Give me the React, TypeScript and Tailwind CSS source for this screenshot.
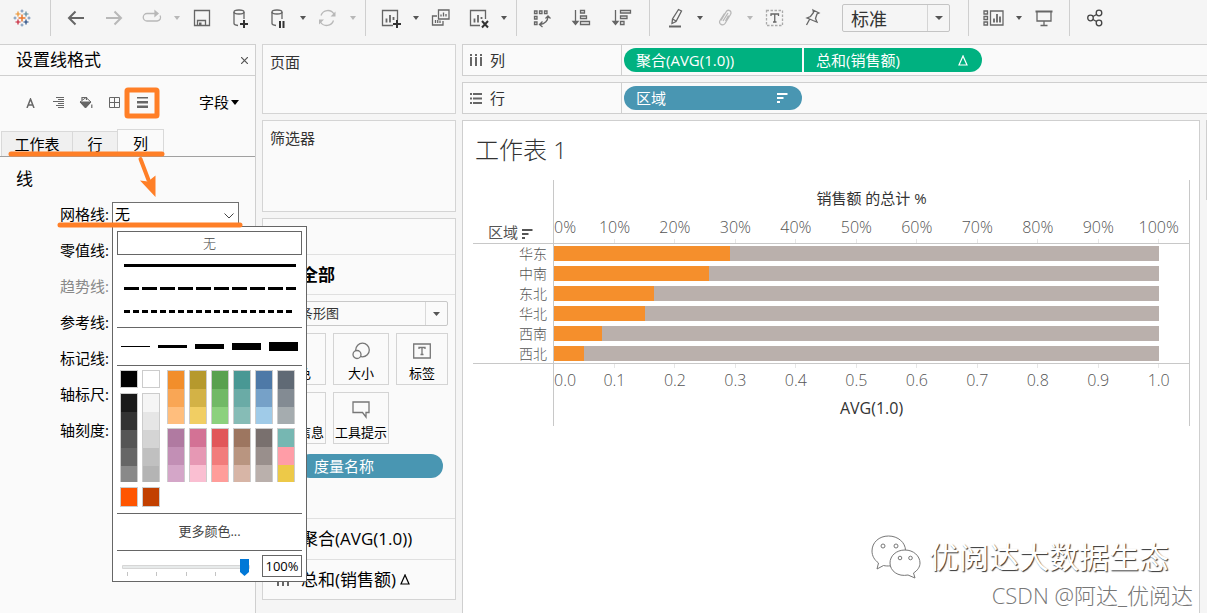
import type { ReactNode } from 'react';

const regions = [
  { name: '华东', share: 29.1 },
  { name: '中南', share: 25.7 },
  { name: '东北', share: 16.6 },
  { name: '华北', share: 15.1 },
  { name: '西南', share: 8 },
  { name: '西北', share: 5 },
];

const topTicks = ['0%', '10%', '20%', '30%', '40%', '50%', '60%', '70%', '80%', '90%', '100%'];
const bottomTicks = ['0.0', '0.1', '0.2', '0.3', '0.4', '0.5', '0.6', '0.7', '0.8', '0.9', '1.0'];

const greys = [
  ['#1a1a1a', '#f5f5f5'],
  ['#333333', '#e6e6e6'],
  ['#555555', '#d4d4d4'],
  ['#666666', '#c0c0c0'],
  ['#898989', '#b4b4b4'],
];

const palettes = [
  [
    ['#f28e2b', '#f9a655', '#ffbe7d'],
    ['#b6992d', '#d3b246', '#f1ce63'],
    ['#59a14f', '#71b966', '#8cd17d'],
    ['#499894', '#6aaba6', '#86bcb6'],
    ['#4e79a7', '#76a1c8', '#a0cbe8'],
    ['#606a75', '#838b93', '#a5acaf'],
  ],
  [
    ['#b07aa1', '#c28fb5', '#d4a6c8'],
    ['#d37295', '#e698b4', '#fabfd2'],
    ['#e15759', '#f17c7b', '#ff9d9a'],
    ['#9d7660', '#b99580', '#d7b5a6'],
    ['#79706e', '#998f8c', '#bab0ac'],
    ['#76b7b2', '#ff9da7', '#edc948'],
  ],
];

function Icon({ children, className = 'text-[#666]' }: { children: ReactNode; className?: string }) {
  return (
    <svg width="24" height="24" viewBox="0 0 24 24" fill="none" stroke="currentColor" strokeWidth="1.3" className={className}>
      {children}
    </svg>
  );
}

function Tool({ label, children }: { label: string; children: ReactNode }) {
  return (
    <button aria-label={label} className="flex h-8 w-[38px] items-center justify-center">
      {children}
    </button>
  );
}

function Caret({ faded = false }: { faded?: boolean }) {
  return (
    <button aria-label="展开" className="flex h-8 w-3 items-center justify-center">
      <svg width="6" height="4" viewBox="0 0 6 4" className={faded ? 'text-[#b8b8b8]' : 'text-[#555]'}>
        <path d="M0 0h6L3 4z" fill="currentColor" />
      </svg>
    </button>
  );
}

function Group({ children, className = 'px-1.5' }: { children: ReactNode; className?: string }) {
  return <div className={`flex h-9 items-center border-l border-[#cfcfcf] ${className}`}>{children}</div>;
}

function TableauLogo() {
  return (
    <svg width="24" height="24" viewBox="0 0 24 24" fill="none" strokeWidth="1.2">
      <path d="M12 8.500v7M8.500 12h7" stroke="#e8762c" strokeWidth="1.500" />
      <path d="M8 5.500v5M5.500 8h5" stroke="#eb912c" />
      <path d="M16 5.500v5M13.500 8h5" stroke="#59879b" />
      <path d="M8 13.500v5M5.500 16h5" stroke="#c72035" />
      <path d="M16 13.500v5M13.500 16h5" stroke="#1f457e" />
      <path d="M12 3.500v3M10.500 5h3M12 17.500v3M10.500 19h3M5 10.500v3M3.500 12h3M19 10.500v3M17.500 12h3" stroke="#6f8fb5" strokeWidth="1" />
    </svg>
  );
}

function Toolbar() {
  return (
    <header className="flex h-11 items-start">
      <div className="flex h-9 w-[50px] items-center pl-2.5">
        <button aria-label="起始页">
          <TableauLogo />
        </button>
      </div>
      <Group>
        <Tool label="撤消">
          <Icon><path d="M20 12H5M11.500 5.500L5 12l6.500 6.500" strokeWidth="2" /></Icon>
        </Tool>
        <Tool label="重做">
          <Icon className="text-[#b8b8b8]"><path d="M4 12h15M12.500 5.500L19 12l-6.500 6.500" strokeWidth="2" /></Icon>
        </Tool>
        <Tool label="重播">
          <Icon className="text-[#b8b8b8]">
            <path d="M17 7.500H7a3.500 3.500 0 0 0 0 7.500h10a3.500 3.500 0 0 0 3-5.500" />
            <path d="M15 5l3 2.500-3 2.500z" fill="currentColor" />
          </Icon>
        </Tool>
        <Caret faded />
        <Tool label="保存">
          <Icon>
            <path d="M4.500 4.500h15v15h-15zM7.500 19v-4.500h8V19" />
            <path d="M9 16.500h2.500V19H9z" fill="currentColor" stroke="none" />
          </Icon>
        </Tool>
        <Tool label="新建数据源">
          <Icon>
            <ellipse cx="11" cy="6" rx="5" ry="2" />
            <path d="M6 6v11.500c0 1 1.500 1.700 4 2M16 6v7" />
            <path d="M16 14v8M12 18h8" stroke="#333" strokeWidth="2" />
          </Icon>
        </Tool>
        <Tool label="暂停自动更新">
          <Icon>
            <ellipse cx="11" cy="6" rx="5" ry="2" />
            <path d="M6 6v11.500c0 1 1.500 1.700 4 2M16 6v7" />
            <path d="M14 15v7M17.500 15v7" stroke="#333" strokeWidth="2" />
          </Icon>
        </Tool>
        <Caret />
        <Tool label="刷新">
          <Icon className="text-[#b8b8b8]">
            <path d="M5 9.500a7.200 7.200 0 0 1 13-1.500M17.500 14.500a7.200 7.200 0 0 1-13 1.500" />
            <path d="M19.500 5.500v5h-5zM3 18.500v-5h5z" fill="currentColor" stroke="none" />
          </Icon>
        </Tool>
        <Caret faded />
      </Group>
      <Group>
        <Tool label="新建工作表">
          <Icon>
            <path d="M14 19.500H3.500v-15h15V14" />
            <path d="M7.500 16.500v-4M11 16.500V9M14.500 14v-3" strokeWidth="1.800" />
            <path d="M18 14v8M14 18h8" stroke="#333" strokeWidth="2" />
          </Icon>
        </Tool>
        <Caret />
        <Tool label="复制">
          <Icon>
            <path d="M9.500 4h10.500v9H9.500zM8 10H3.500v9h10.500v-4" />
            <path d="M12 10.500V8.500M14.500 10.500V6.500M17 10.500V8M6.500 17v-3M8.750 17v-3M11 17v-2.500" />
          </Icon>
        </Tool>
        <Tool label="清除工作表">
          <Icon>
            <path d="M13 19.500H3.500v-15h15V13" />
            <path d="M7.500 16.500v-4M11 16.500V9M14.500 13v-2" strokeWidth="1.800" />
            <path d="M15 15l6 6.500M21 15l-6 6.500" stroke="#333" strokeWidth="2" />
          </Icon>
        </Tool>
        <Caret />
      </Group>
      <Group className="gap-0.5 pr-2 pl-1.5">
        <Tool label="交换行和列">
          <Icon>
            <path d="M4.500 5h2.500v2.500H4.500zM9.500 5h2.500v2.500H9.500zM14.500 5h2.500v2.500h-2.500zM4.500 10.500h2.500V13H4.500zM4.500 16h2.500v2.500H4.500z" />
            <path d="M18 10.500c0 4-3 7.500-8 8M15.500 12.500l2.500-2.500 2.500 2.500M12.500 15.500l-3 3 3 2.500" />
          </Icon>
        </Tool>
        <Tool label="升序排序">
          <Icon>
            <path d="M5.500 4v13" />
            <path d="M3 15.500h5l-2.500 3z" fill="currentColor" />
            <path d="M10.500 4.500h4V7h-4zM10.500 10h6v2.500h-6zM10.500 15.500h9V18.500h-9z" />
          </Icon>
        </Tool>
        <Tool label="降序排序">
          <Icon>
            <path d="M5.500 4v13" />
            <path d="M3 15.500h5l-2.500 3z" fill="currentColor" />
            <path d="M10.500 4.500h10V7h-10zM10.500 10h6.500v2.500h-6.500zM10.500 15.500h3.500V18.500h-3.500z" />
          </Icon>
        </Tool>
      </Group>
      <Group>
        <Tool label="突出显示">
          <Icon>
            <path d="M15.500 3.500l3 1.500-5.500 10.500-4 2 .500-4.500zM9.500 13l3.500 2" />
            <path d="M6 20.500h12" strokeWidth="2" />
          </Icon>
        </Tool>
        <Caret />
        <Tool label="组成员">
          <Icon className="text-[#b8b8b8]">
            <path d="M8 14.500l5-8.500c2-3.500 6.500-1 4.500 2.500l-5.500 9c-2 3-7 .500-5-3l4.500-7M10 15l5-8M12.500 15l3-5.500" />
          </Icon>
        </Tool>
        <Caret faded />
        <Tool label="显示标记标签">
          <Icon>
            <path d="M3.500 4.500h16v15h-16z" stroke="#aaa" strokeDasharray="2.500 1.500" />
            <path d="M8 10V8h7.500v2M11.750 8v8M10 16h3.500" />
          </Icon>
        </Tool>
        <Tool label="固定轴">
          <Icon>
            <path d="M12 4l6 3-2 1-1.500 4.500 1.500 3.500-4-1.500-3.500-1.500-2.500-1 3.500-1.500 3-4zM8.500 13.500L5.500 19" />
          </Icon>
        </Tool>
        <div className="relative mr-3 ml-2.5 h-7 w-27 rounded-xs border border-[#c4c4c4]">
          <select aria-label="适合" className="h-full w-full appearance-none pl-2 text-lg text-[#333]">
            <option>标准</option>
          </select>
          <span className="pointer-events-none absolute top-0 right-0 flex h-full w-[22px] items-center justify-center border-l border-[#d4d4d4]">
            <svg width="8" height="4" viewBox="0 0 8 4"><path d="M0 0h8L4 4z" fill="#555" /></svg>
          </span>
        </div>
      </Group>
      <Group>
        <Tool label="显示/隐藏卡">
          <Icon>
            <path d="M2 5h3.500v3H2zM2 10.500h3.500v3H2zM2 16h3.500v3H2zM8.500 5h12.500v14H8.500z" />
            <path d="M12 16.500v-4M15 16.500V8M18 16.500v-6" strokeWidth="1.800" />
          </Icon>
        </Tool>
        <Caret />
        <Tool label="演示模式">
          <Icon>
            <path d="M3.500 5.500h17" strokeWidth="2" />
            <path d="M5 6v9h14V6M12 15v4.500M8.500 19.500h7" />
          </Icon>
        </Tool>
      </Group>
      <Group>
        <Tool label="共享">
          <Icon className="text-[#444]">
            <circle cx="7.500" cy="12" r="2.800" />
            <circle cx="16" cy="7" r="2.800" />
            <circle cx="16" cy="17" r="2.800" />
            <path d="M10 10.500l3.500-2M10 13.500l3.500 2" />
          </Icon>
        </Tool>
      </Group>
    </header>
  );
}

function Swatch({ color }: { color: string }) {
  return <button aria-label={color} className="block h-[18px] w-full" style={{ backgroundColor: color }} />;
}

function LinePopup() {
  return (
    <div className="absolute top-full -left-px z-10 w-[195px] border border-[#666] bg-white px-1 pt-1 pb-1 text-[13px] text-[#444]">
      <button className="block h-6 w-full border border-[#666] font-light leading-5">无</button>
      <svg width="100%" height="72" stroke="#000" strokeWidth="3" className="block">
        <path d="M7 10.500h172" />
        <path d="M7 33.500h172" strokeDasharray="15 3" />
        <path d="M7 56.500h169" strokeDasharray="6 3" />
      </svg>
      <div className="flex h-[39px] items-center gap-2 border-y border-[#666] px-1">
        <button aria-label="1" className="h-px flex-1 bg-black" />
        <button aria-label="2" className="h-[3px] flex-1 bg-black" />
        <button aria-label="3" className="h-[5px] flex-1 bg-black" />
        <button aria-label="4" className="h-[7px] flex-1 bg-black" />
        <button aria-label="5" className="h-[9px] flex-1 bg-black" />
      </div>
      <div className="flex gap-[7px] px-[3px] pt-1">
        <div className="flex flex-col gap-[5px]">
          <div className="flex gap-1">
            <div className="w-[18px] border border-[#ccc]"><button aria-label="黑" className="block h-4 w-full bg-black" /></div>
            <div className="w-[18px] border border-[#ccc]"><button aria-label="白" className="block h-4 w-full bg-white" /></div>
          </div>
          <div className="flex gap-1">
            {[0, 1].map((i) => (
              <div key={i} className="h-[89px] w-[18px] overflow-hidden border border-b-0 border-[#ccc]">
                {greys.map((row) => <Swatch key={row[i]} color={row[i]} />)}
              </div>
            ))}
          </div>
          <div className="flex gap-1">
            <div className="w-[18px] border border-[#ccc]"><Swatch color="#ff5500" /></div>
            <div className="w-[18px] border border-[#ccc]"><Swatch color="#c24000" /></div>
          </div>
        </div>
        <div className="flex flex-col gap-1">
          {palettes.map((block, i) => (
            <div key={i} className="flex gap-1">
              {block.map((col) => (
                <div key={col[0]} className="h-[54px] w-[18px] overflow-hidden border-x border-t border-[#ccc]">
                  {col.map((c) => <Swatch key={c} color={c} />)}
                </div>
              ))}
            </div>
          ))}
        </div>
      </div>
      <button className="mt-1.5 block h-[38px] w-full border-y border-[#666]">更多颜色...</button>
      <div className="flex items-center justify-between pt-1">
        <div className="relative ml-[5px] h-[22px] w-32">
          <input type="range" aria-label="不透明度" defaultValue={100} className="absolute inset-0 w-full opacity-0" />
          <svg width="128" height="22" className="pointer-events-none block">
            <path d="M.500 10.500h127v3H.500z" fill="#e7eaea" stroke="#d6d6d6" />
            <path d="M5.500 17v4M34.500 17v4M64.500 17v4M93.500 17v4" stroke="#c4c4c4" />
            <path d="M118 4h9v13l-4.500 4-4.500-4z" fill="#0078d7" />
          </svg>
        </div>
        <input aria-label="百分比" defaultValue="100%" className="h-[22px] w-10 border border-[#666] text-center text-[13px] text-black" />
      </div>
    </div>
  );
}

function FormatPane() {
  return (
    <aside className="relative flex w-64 shrink-0 flex-col border-t border-r border-[#cfcfcf] bg-[#fafafa] text-[15px] text-black">
      <div className="flex h-[31px] items-center justify-between border-b border-[#cfcfcf] pr-[7px] pl-4">
        <h2 className="text-[17px]">设置线格式</h2>
        <button aria-label="关闭">
          <svg width="7" height="7" stroke="#555" strokeWidth="1.200"><path d="M0 0l7 7M7 0L0 7" /></svg>
        </button>
      </div>
      <div className="flex h-[53px] items-center pl-4">
        <button aria-label="字体" className="flex w-7 justify-center">
          <svg width="9" height="10" fill="none" stroke="#666" strokeWidth="1.500"><path d="M1 10L4.500 1 8 10M2.200 7h4.600" /></svg>
        </button>
        <button aria-label="对齐" className="flex w-7 justify-center">
          <svg width="11" height="11" stroke="#666"><path d="M3 .500h8M5 2.500h6M0 4.500h11M5 6.500h6M3 8.500h8M5 10.500h6" /></svg>
        </button>
        <button aria-label="阴影" className="flex w-7 justify-center">
          <svg width="14" height="13" viewBox="0 0 14 13" fill="none" stroke="#666">
            <path d="M1 6L7 1.500 12 6 6.500 11.500z" />
            <path d="M1 6h11l-5.500 6z" fill="#666" />
            <path d="M3 4V1.500h4.500V4M12.800 8.500v3.500" strokeWidth="1.200" />
          </svg>
        </button>
        <button aria-label="边界" className="flex w-7 justify-center">
          <svg width="11" height="11" fill="none" stroke="#666"><path d="M.500 .500h10v10H.500zM5.500 0v11M0 5.500h11" /></svg>
        </button>
        <button aria-label="线" className="flex w-7 justify-center">
          <svg width="11" height="11" fill="#666"><path d="M0 0h11v1.500H0zM0 4h11v2.500H0zM0 8.500h11v2.500H0z" /></svg>
        </button>
        <button className="ml-auto flex items-center gap-0.5 pr-4">
          字段
          <svg width="8" height="5"><path d="M0 0h8L4 5z" /></svg>
        </button>
      </div>
      <div className="flex h-7 items-end border-b border-[#a0a0a0] pl-px">
        <button className="h-[25px] w-[72px] border border-b-0 border-[#d9d9d9] bg-[#f0f0f0]">工作表</button>
        <button className="h-[25px] w-11 border-t border-[#d9d9d9] bg-[#f0f0f0]">行</button>
        <button className="h-[27px] w-[47px] border border-b-0 border-[#d9d9d9] bg-[#fafafa]">列</button>
      </div>
      <h3 className="px-4 pt-2.5 text-[17px] leading-6">线</h3>
      <div className="mt-[5px] flex flex-col">
        <div className="flex h-9 items-center">
          <label htmlFor="grid" className="w-[109px] text-right">网格线:</label>
          <div className="relative ml-[3px] h-[25px] w-[127px] border border-[#707070] bg-white">
            <select id="grid" className="h-full w-full appearance-none pl-0.5"><option>无</option></select>
            <svg width="10" height="6" fill="none" stroke="#444" className="pointer-events-none absolute top-2.5 right-1"><path d="M.500 .500L5 5 9.500 .500" /></svg>
            <LinePopup />
          </div>
        </div>
        {['零值线:', '趋势线:', '参考线:', '标记线:', '轴标尺:', '轴刻度:'].map((text) => (
          <div key={text} className={`flex h-9 w-[109px] items-center justify-end ${text === '趋势线:' ? 'text-[#888]' : ''}`}>
            {text}
          </div>
        ))}
      </div>
      <svg width="256" height="200" className="pointer-events-none absolute top-0 left-0 z-20" fill="none" stroke="#ff7f27" strokeWidth="5" strokeLinecap="round">
        <rect x="127" y="45" width="30" height="26" rx="1" />
        <path d="M11 109h151M60 180h180" />
        <path d="M140.500 114l8 21" strokeWidth="4" />
        <path d="M155.500 152l-15.500-16.500 8 1 7.500-6z" fill="#ff7f27" stroke="none" />
      </svg>
    </aside>
  );
}

function MarkButton({ label, children, className = 'w-14' }: { label: string; children?: ReactNode; className?: string }) {
  return (
    <button className={`flex h-[52px] flex-col items-center justify-end border border-[#d4d4d4] text-[13px] text-black ${className}`}>
      {children}
      <span className="whitespace-nowrap leading-[22px]">{label}</span>
    </button>
  );
}

function Delta({ className = '' }: { className?: string }) {
  return (
    <svg width="10" height="11" viewBox="0 0 10 11" fill="none" stroke="currentColor" strokeWidth="1.200" className={className}>
      <path d="M5 1L1 10h8zM5 1l4 9" />
    </svg>
  );
}

function Cards() {
  return (
    <section className="flex w-[194px] shrink-0 flex-col gap-1.5 text-[15px] text-[#333]">
      <div className="h-[70px] border border-[#d4d4d4] bg-[#fafafa] px-[7px] pt-1.5">页面</div>
      <div className="h-[92px] border border-[#d4d4d4] bg-[#fafafa] px-[7px] pt-1.5">筛选器</div>
      <div className="border border-[#d4d4d4] bg-[#fafafa]">
        <div className="h-9 border-b border-[#e0e0e0]" />
        <div className="flex h-10 items-center border-b border-[#e0e0e0] pl-[38px] text-[17px] font-bold text-black">全部</div>
        <div className="px-[7px] pt-1.5">
          <div className="relative flex h-[25px] items-center rounded-xs border border-[#c8c8c8]">
            <select aria-label="标记类型" className="h-full w-full appearance-none pl-[29px] text-[13px]"><option>条形图</option></select>
            <span className="pointer-events-none absolute right-0 flex h-full w-[22px] items-center justify-center border-l border-[#d9d9d9]">
              <svg width="7" height="4"><path d="M0 0h7L3.500 4z" fill="#555" /></svg>
            </span>
          </div>
          <div className="mt-[7px] flex gap-[7px]">
            <MarkButton label="颜色" />
            <MarkButton label="大小">
              <svg width="18" height="20" viewBox="0 0 18 20" fill="none" stroke="#777" strokeWidth="1.300">
                <circle cx="10.500" cy="8" r="6.800" />
                <circle cx="5" cy="12.500" r="4" fill="#fafafa" />
              </svg>
            </MarkButton>
            <MarkButton label="标签" className="w-[52px]">
              <svg width="18" height="20" viewBox="0 0 18 20" fill="none" stroke="#777" strokeWidth="1.300">
                <path d="M.700 2h16.600v14H.700z" />
                <path d="M6 7V5.500h6V7M9 5.500v7M7.500 12.500h3" />
              </svg>
            </MarkButton>
          </div>
          <div className="mt-[7px] flex gap-[7px]">
            <MarkButton label="详细信息" />
            <MarkButton label="工具提示">
              <svg width="18" height="20" viewBox="0 0 18 20" fill="none" stroke="#777" strokeWidth="1.300">
                <path d="M1 1h16v10.500h-3V16l-3.500-4.500H1z" />
              </svg>
            </MarkButton>
          </div>
          <div className="mt-2.5 mr-[5px] ml-7 flex h-6 items-center rounded-full bg-[#4996b2] pl-4 text-white">度量名称</div>
        </div>
        <div className="mt-10 flex h-[42px] items-center border-y border-[#e0e0e0] pl-[38px] text-[17px] text-black">聚合(AVG(1.0))</div>
        <div className="flex h-[39px] items-center pl-3.5 text-[17px] text-black">
          <svg width="12" height="12" fill="#666" className="mr-3 shrink-0"><path d="M0 0h2v2H0zM5 0h2v2H5zM10 0h2v2h-2zM0 4h2v8H0zM5 4h2v8H5zM10 4h2v8h-2z" /></svg>
          总和(销售额)
          <Delta className="ml-1" />
        </div>
      </div>
    </section>
  );
}

function SortIcon() {
  return (
    <svg width="11" height="10" fill="currentColor">
      <path d="M0 0h10.500v2H0zM0 4h6.500v2H0zM0 8h3v2H0z" />
    </svg>
  );
}

// The axis runs to 105%, so it is split in 21 parts of 5% each.
function Axis({ ticks, className }: { ticks: string[]; className: string }) {
  return (
    <div className={`flex text-base leading-5 ${className}`}>
      {ticks.map((tick, i) => (
        <span key={tick} className={i === 0 ? 'w-0 flex-1 whitespace-nowrap' : 'w-0 flex-2 text-center'}>{tick}</span>
      ))}
    </div>
  );
}

function TickMarks() {
  return (
    <div className="flex h-1">
      <span className="flex-2" />
      {topTicks.slice(1).map((tick) => (
        <span key={tick} className={`border-l border-[#e6e6e6] ${tick === '100%' ? 'flex-1' : 'flex-2'}`} />
      ))}
    </div>
  );
}

function Worksheet() {
  return (
    <div className="flex-1 border border-b-0 border-[#cfcfcf] bg-white pr-[9px] pl-2.5">
      <h1 className="px-0.5 pt-[11px] text-2xl font-light leading-9 text-[#333]">工作表 1</h1>
      <div className="mt-3 flex font-light text-[#555]">
        <div className="w-20 shrink-0 text-[15px]">
          <div className="flex h-16 items-end justify-end gap-1 border-b border-[#c8c8c8] pr-5 text-[15px] font-normal">
            区域
            <span className="mb-1"><SortIcon /></span>
          </div>
          <div className="h-30 border-b border-[#c8c8c8]">
            {regions.map((r) => (
              <div key={r.name} className="h-5 pr-1.5 text-right text-sm leading-5">{r.name}</div>
            ))}
          </div>
        </div>
        <div className="flex-1 border-x border-[#c8c8c8]">
          <div className="flex h-16 flex-col justify-between border-b border-[#c8c8c8]">
            <div className="pt-2 text-center text-[15px] font-normal leading-5 text-[#333]">销售额 的总计 %</div>
            <div>
              <Axis ticks={topTicks} className="pb-0.5" />
              <TickMarks />
            </div>
          </div>
          <div className="h-30 border-b border-[#c8c8c8]">
            {regions.map((r) => (
              <div key={r.name} className="flex h-5 pt-0.5">
                <div className="h-[15px] w-0 flex-20 bg-[#bab0ac]">
                  <div className="h-full bg-[#f58f2c]" style={{ width: `${r.share}%` }} />
                </div>
                <div className="flex-1" />
              </div>
            ))}
          </div>
          <TickMarks />
          <Axis ticks={bottomTicks} className="pt-0.5" />
          <div className="pt-2 pb-2 text-center text-base font-normal leading-5 text-[#333]">AVG(1.0)</div>
        </div>
      </div>
    </div>
  );
}

function Shelf({ name, icon, children }: { name: string; icon: ReactNode; children: ReactNode }) {
  return (
    <div className="flex h-8 shrink-0 border-y border-l border-[#cfcfcf] bg-[#fafafa]">
      <div className="flex w-[159px] shrink-0 items-center gap-2 border-r border-[#cfcfcf] pl-[7px] text-[15px] text-[#333]">
        {icon}
        {name}
      </div>
      <div className="flex items-center gap-0.5 pl-0.5 text-[15px] text-white">{children}</div>
    </div>
  );
}

function Watermark() {
  return (
    <div className="pointer-events-none absolute right-3.5 bottom-0.5 flex flex-col items-end">
      <div className="mr-6 flex items-center gap-2">
        <svg width="50" height="44" viewBox="0 0 50 44" fill="#fff" stroke="#777" strokeWidth="1">
          <path d="M17.500 1C8 1 1 7.500 1 16c0 5 2.500 9 6.500 12L6 34l6.500-3.500c8 2 22-2 22-15C34.500 7.500 27 1 17.500 1z" />
          <path d="M34 15c-9 0-15 6-15 13 0 8 8 14 18 12l7 3-1.500-5c4-2.500 6.500-6 6.500-10 0-7-6.500-13-15-13z" />
          <circle cx="12" cy="11" r="2" />
          <circle cx="25" cy="11" r="2" />
          <circle cx="29" cy="23" r="1.800" />
          <circle cx="39.500" cy="23" r="1.800" />
        </svg>
        <span className="text-[30px] leading-9 text-white [text-shadow:1px_1px_1px_#333]">优阅达大数据生态</span>
      </div>
      <div className="text-[22px] font-light leading-8 text-[#777]">CSDN @阿达_优阅达</div>
    </div>
  );
}

export default function App() {
  return (
    <div className="relative flex min-h-screen flex-col overflow-hidden bg-[#f5f5f5] font-['Open_Sans','Noto_Sans_CJK_SC',sans-serif]">
      <Toolbar />
      <main className="flex flex-1 gap-1.5">
        <FormatPane />
        <Cards />
        <section className="flex min-w-0 flex-1 flex-col gap-1.5">
          <Shelf
            name="列"
            icon={<svg width="12" height="12" fill="#666"><path d="M0 0h2v2H0zM5 0h2v2H5zM10 0h2v2h-2zM0 3h2v9H0zM5 3h2v9H5zM10 3h2v9h-2z" /></svg>}
          >
            <div className="flex h-6 w-[178px] items-center rounded-l-full bg-[#00b180] pl-3">聚合(AVG(1.0))</div>
            <div className="flex h-6 w-[178px] items-center justify-between rounded-r-full bg-[#00b180] pr-3.5 pl-3">
              总和(销售额)
              <Delta />
            </div>
          </Shelf>
          <Shelf
            name="行"
            icon={<svg width="12" height="11" fill="#666"><path d="M0 0h2v2H0zM0 4.500h2v2H0zM0 9h2v2H0zM3 0h9v2H3zM3 4.500h9v2H3zM3 9h9v2H3z" /></svg>}
          >
            <div className="flex h-6 w-[178px] items-center justify-between rounded-full bg-[#4996b2] pr-3.5 pl-3">
              区域
              <SortIcon />
            </div>
          </Shelf>
          <div className="flex flex-1 gap-1.5">
            <Worksheet />
            <div className="h-20 w-px bg-[#cfcfcf]" />
          </div>
        </section>
      </main>
      <Watermark />
    </div>
  );
}
